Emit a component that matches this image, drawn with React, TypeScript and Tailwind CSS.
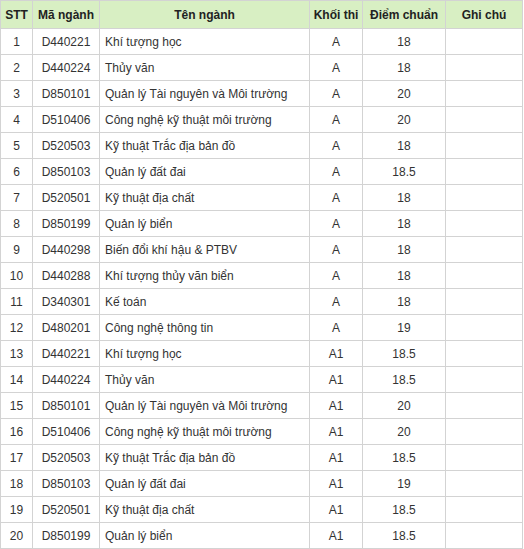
import React from "react";

const rows: [string, string, string, string, string][] = [
  ["1", "D440221", "Khí tượng học", "A", "18"],
  ["2", "D440224", "Thủy văn", "A", "18"],
  ["3", "D850101", "Quản lý Tài nguyên và Môi trường", "A", "20"],
  ["4", "D510406", "Công nghệ kỹ thuật môi trường", "A", "20"],
  ["5", "D520503", "Kỹ thuật Trắc địa bản đồ", "A", "18"],
  ["6", "D850103", "Quản lý đất đai", "A", "18.5"],
  ["7", "D520501", "Kỹ thuật địa chất", "A", "18"],
  ["8", "D850199", "Quản lý biển", "A", "18"],
  ["9", "D440298", "Biến đổi khí hậu & PTBV", "A", "18"],
  ["10", "D440288", "Khí tượng thủy văn biển", "A", "18"],
  ["11", "D340301", "Kế toán", "A", "18"],
  ["12", "D480201", "Công nghệ thông tin", "A", "19"],
  ["13", "D440221", "Khí tượng học", "A1", "18.5"],
  ["14", "D440224", "Thủy văn", "A1", "18.5"],
  ["15", "D850101", "Quản lý Tài nguyên và Môi trường", "A1", "20"],
  ["16", "D510406", "Công nghệ kỹ thuật môi trường", "A1", "20"],
  ["17", "D520503", "Kỹ thuật Trắc địa bản đồ", "A1", "18.5"],
  ["18", "D850103", "Quản lý đất đai", "A1", "19"],
  ["19", "D520501", "Kỹ thuật địa chất", "A1", "18.5"],
  ["20", "D850199", "Quản lý biển", "A1", "18.5"],
];

const grid = "grid grid-cols-[32px_67px_210px_53px_83px_77px]";
const cell = "border-r border-b border-[#d3d3d3] flex items-center";

export default function App() {
  return (
    <div className="w-[524px] h-[549px] bg-white overflow-hidden" style={{ fontFamily: '"Liberation Sans", Arial, sans-serif' }}>
      <div className="w-[523px] border-l border-t border-[#d3d3d3] text-[12px] text-[#333]">
        <div className={`${grid} h-[28px] bg-[#d8efc3] font-bold text-[#222]`}>
          <div className={`${cell} justify-center`}>STT</div>
          <div className={`${cell} justify-center`}>Mã ngành</div>
          <div className={`${cell} justify-center`}>Tên ngành</div>
          <div className={`${cell} justify-center`}>Khối thi</div>
          <div className={`${cell} justify-center`}>Điểm chuẩn</div>
          <div className={`${cell} justify-center`}>Ghi chú</div>
        </div>
        {rows.map((r) => (
          <div key={r[0]} className={`${grid} h-[26px]`}>
            <div className={`${cell} justify-center`}>{r[0]}</div>
            <div className={`${cell} justify-center`}>{r[1]}</div>
            <div className={`${cell} pl-[5px]`}>{r[2]}</div>
            <div className={`${cell} justify-center`}>{r[3]}</div>
            <div className={`${cell} justify-center`}>{r[4]}</div>
            <div className={`${cell}`}></div>
          </div>
        ))}
      </div>
    </div>
  );
}
